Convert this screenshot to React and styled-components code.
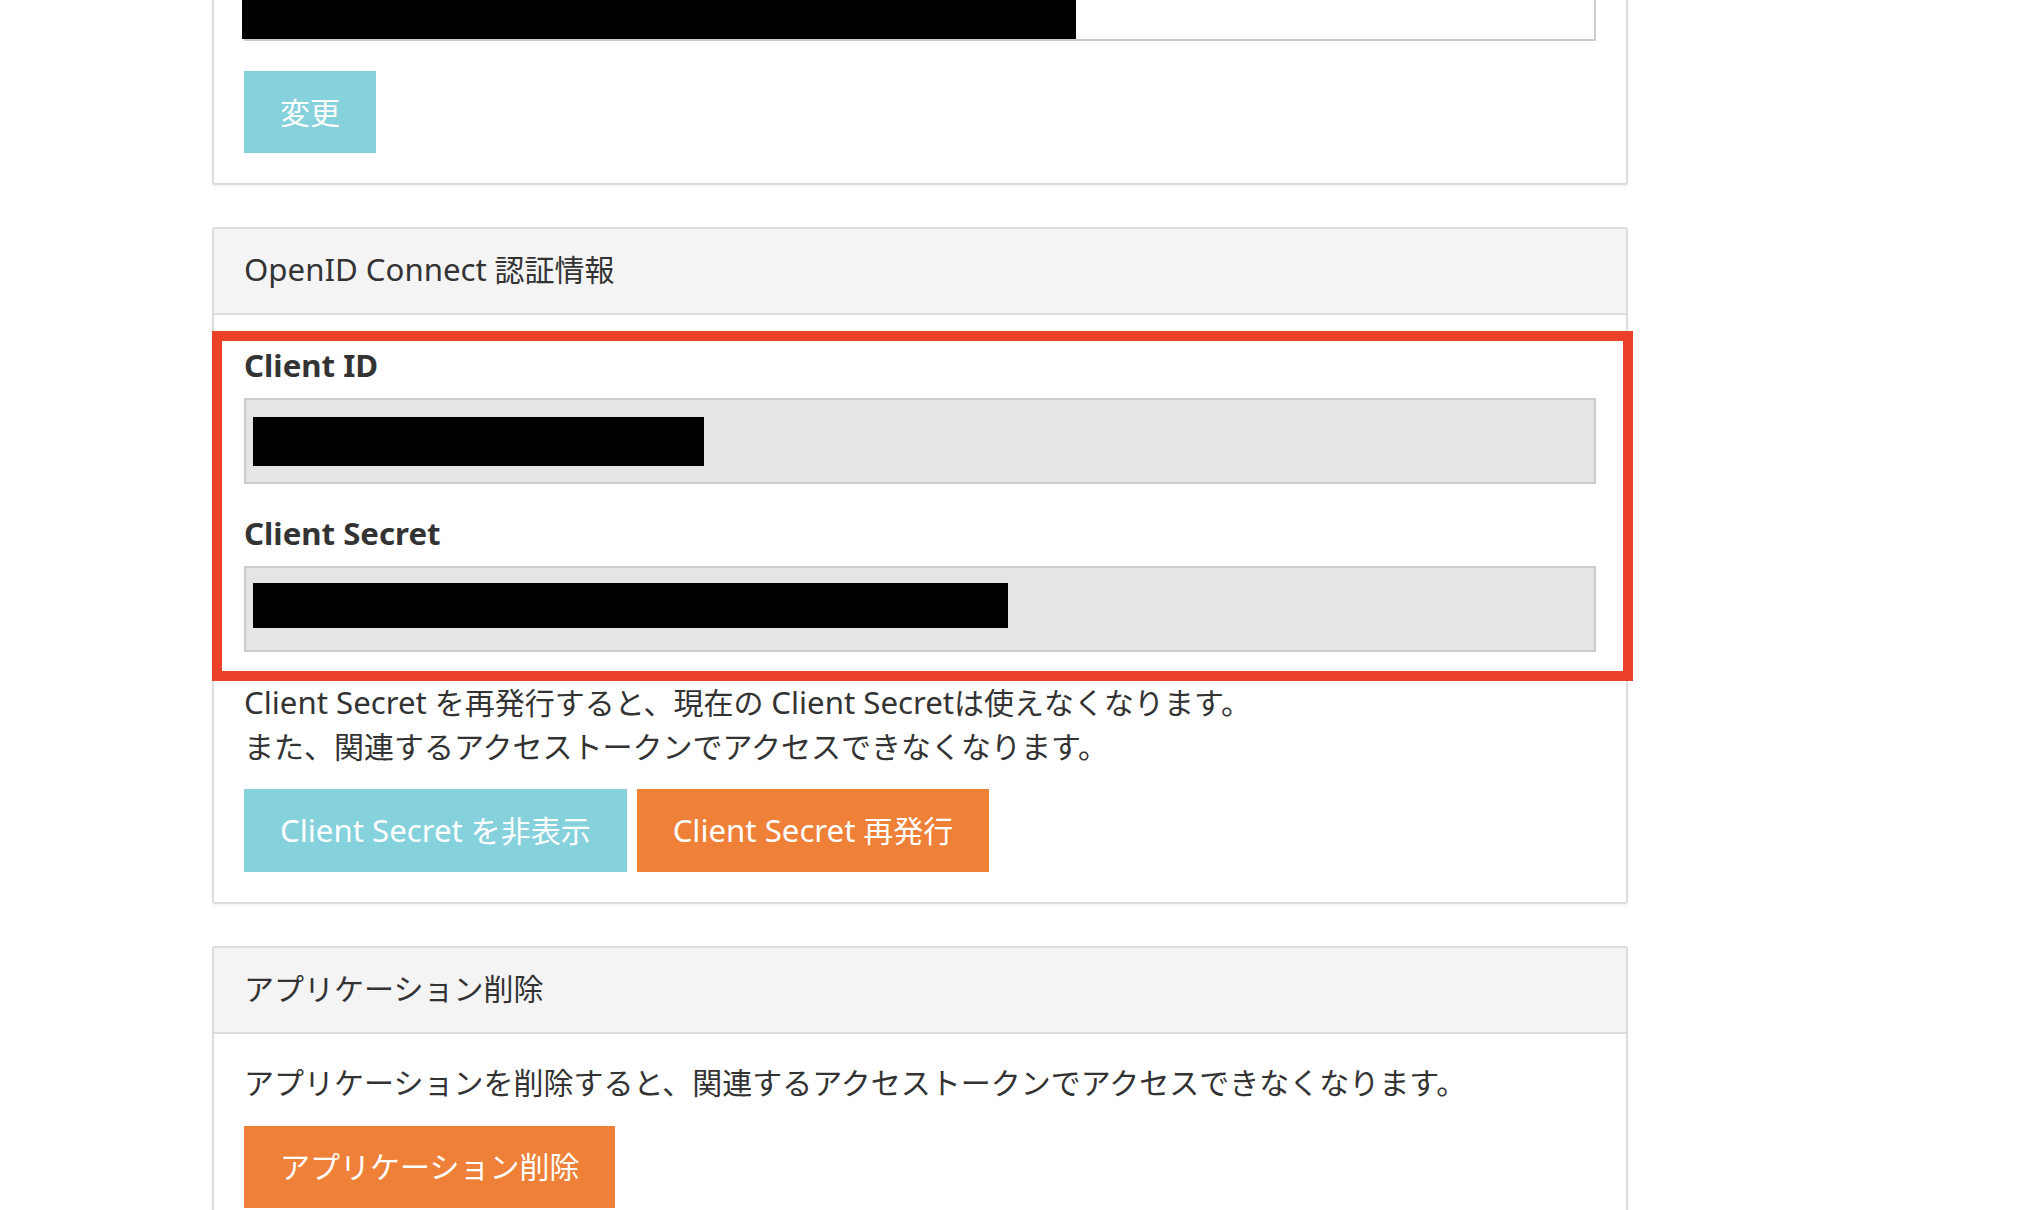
import React from 'react';
import styled, { createGlobalStyle } from 'styled-components';

const GlobalStyle = createGlobalStyle`
    body {
        margin: 0;
        background: #fff;
        color: #333;
        font-family: "Noto Sans", "Open Sans", "Noto Sans CJK JP", sans-serif;
    }
`

// the screenshot is scrolled: the top of the first panel sits above the window
const Page = styled.div`
    width: 1416px;
    margin: -77px 0 0 212px;
`

const Panel = styled.section`
    background: #fff;
    border: 2px solid #ddd;
    border-radius: 3px;
    box-shadow: 0 2px 2px rgba(0, 0, 0, 0.04);
    margin-bottom: 42px;
`

const PanelHeader = styled.h3`
    box-sizing: border-box;
    height: 86px;
    margin: 0;
    padding: 0 30px 4px;
    display: flex;
    align-items: center;
    background: #f4f4f4;
    border-bottom: 2px solid #ddd;
    font-size: 30px;
    font-weight: 400;
    line-height: 45px;
`

const PanelBody = styled.div`
    padding: ${(p) => p.$pt || 30}px 30px 30px;
`

// latin words run a little wider than the japanese text around them
const Latin = styled.span`
    font-size: 1.04em;
`

const Highlight = styled.div`
    position: relative;
    &::after {
        content: '';
        position: absolute;
        top: -16px;
        left: -32px;
        right: -37px;
        bottom: -29px;
        border: 10px solid #ea4128;
        pointer-events: none;
    }
`

const Field = styled.div`
    & + & {
        margin-top: 31px;
    }
`

const Label = styled.label`
    display: block;
    font-size: 30px;
    font-weight: 700;
    line-height: 36px;
    margin: 2px 0 14px;
`

const Input = styled.div`
    position: relative;
    box-sizing: border-box;
    height: 86px;
    border: 2px solid #ccc;
    background: ${(p) => (p.$readOnly ? '#e5e5e5' : '#fff')};
    padding: ${(p) => p.$padTop}px 0 0 7px;
`

const Redacted = styled.div`
    background: #000;
    width: ${(p) => p.$w}px;
    height: ${(p) => p.$h}px;
`

// black bar that covers the visible part of the cut-off top input
const RedactedOver = styled.div`
    position: absolute;
    left: -4px;
    top: -2px;
    bottom: 0;
    width: 834px;
    background: #000;
`

const Text = styled.p`
    margin: ${(p) => p.$mt || 0}px 0 0;
    font-size: 30px;
    line-height: 43.5px;
`

const ButtonRow = styled.div`
    display: flex;
    gap: 10px;
    margin-top: ${(p) => p.$mt || 0}px;
`

const Button = styled.button`
    box-sizing: border-box;
    height: ${(p) => p.$h || 82}px;
    padding: 0 36px;
    border: none;
    border-radius: 0;
    background: ${(p) => (p.$danger ? '#ef8038' : '#85d1dc')};
    color: #fff;
    font-family: inherit;
    font-size: 30px;
    line-height: 45px;
    cursor: pointer;
`

export default function App() {
    return (
        <>
            <GlobalStyle />
            <Page>
                <Panel>
                    <PanelBody>
                        <Input>
                            <RedactedOver />
                        </Input>
                        <ButtonRow $mt={30}>
                            <Button>変更</Button>
                        </ButtonRow>
                    </PanelBody>
                </Panel>

                <Panel>
                    <PanelHeader><Latin>OpenID Connect</Latin>&nbsp;認証情報</PanelHeader>
                    <PanelBody>
                        <Highlight>
                            <Field>
                                <Label><Latin>Client ID</Latin></Label>
                                <Input $readOnly $padTop={17}>
                                    <Redacted $w={451} $h={49} />
                                </Input>
                            </Field>
                            <Field>
                                <Label><Latin>Client Secret</Latin></Label>
                                <Input $readOnly $padTop={15}>
                                    <Redacted $w={755} $h={45} />
                                </Input>
                            </Field>
                        </Highlight>
                        <Text $mt={29}>
                            <Latin>Client Secret</Latin> を再発行すると、現在の <Latin>Client Secret</Latin>は使えなくなります。<br />
                            また、関連するアクセストークンでアクセスできなくなります。
                        </Text>
                        <ButtonRow $mt={21}>
                            <Button $h={83}><Latin>Client Secret</Latin> を非表示</Button>
                            <Button $h={83} $danger><Latin>Client Secret</Latin> 再発行</Button>
                        </ButtonRow>
                    </PanelBody>
                </Panel>

                <Panel>
                    <PanelHeader>アプリケーション削除</PanelHeader>
                    <PanelBody $pt={27}>
                        <Text>アプリケーションを削除すると、関連するアクセストークンでアクセスできなくなります。</Text>
                        <ButtonRow $mt={21}>
                            <Button $danger>アプリケーション削除</Button>
                        </ButtonRow>
                    </PanelBody>
                </Panel>
            </Page>
        </>
    );
}
